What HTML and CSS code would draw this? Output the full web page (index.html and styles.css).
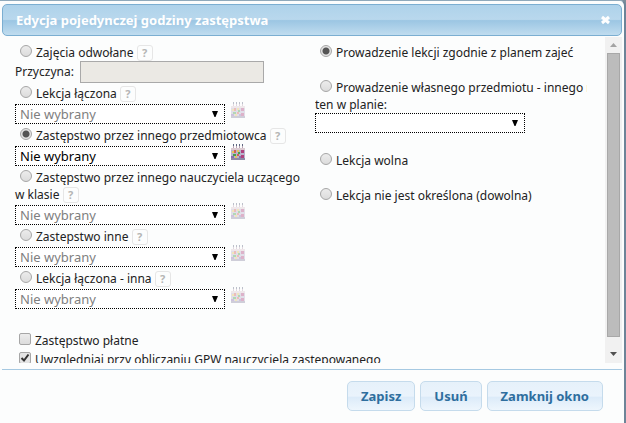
FILE: index.html
```html
<!DOCTYPE html>
<html lang="pl">
<head>
    <meta charset="UTF-8">
    <meta name="viewport" content="width=device-width, initial-scale=1.0">
    <title>Edycja pojedynczej godziny zastępstwa</title>
    <link rel="stylesheet" href="styles.css">
</head>
<body>
    <svg width="0" height="0" class="sprites" aria-hidden="true">
        <symbol id="calendar" viewBox="0 0 14 16">
            <rect x="0" y="4" width="14" height="12" fill="#b9b4cc"/>
            <rect x="0" y="4" width="14" height="2" fill="#dccbd2"/>
            <rect x="0" y="14" width="14" height="2" fill="#8e8aa6"/>
            <path d="M2 0h1v2h-1zM5 0h1v2h-1zM8 0h1v2h-1zM11 0h1v2h-1z" fill="#5d6680"/>
            <path d="M2 2h1v2h-1zM5 2h1v2h-1zM8 2h1v2h-1zM11 2h1v2h-1z" fill="#b9a3b3"/>
            <path d="M1 7h2v2h-2zM6 6h2v2h-2zM4 12h2v2h-2z" fill="#e3c65c"/>
            <path d="M3 6h2v3h-2zM6 10h2v2h-2z" fill="#d2605a"/>
            <path d="M7 8h2v2h-2zM2 10h3v2h-3z" fill="#49a04c"/>
            <path d="M0 12h3v2h-3zM8 12h2v2h-2z" fill="#8a6fb0"/>
            <path d="M10 6h3v3h-3zM10 11h3v3h-3z" fill="#b0437e"/>
        </symbol>
    </svg>
    <div class="dialog">
        <div class="titlebar">
            <h1>Edycja pojedynczej godziny zastępstwa</h1>
            <button type="button" class="close" aria-label="Zamknij">
                <svg width="9" height="10" viewBox="0 0 9 10"><path d="M1 2L8 8M8 2L1 8" stroke="#fff" stroke-width="3"/></svg>
            </button>
        </div>

        <div class="body">
            <form class="content" id="zastepstwo">
                <div class="columns">
                    <div class="left">
                        <div class="option">
                            <input type="radio" name="typ" id="odwolane"><label for="odwolane">Zajęcia odwołane</label>
                            <span class="help">?</span>
                        </div>
                        <div class="reason">
                            <label for="przyczyna">Przyczyna:</label>
                            <input type="text" id="przyczyna" disabled>
                        </div>

                        <div class="option">
                            <input type="radio" name="typ" id="laczona"><label for="laczona">Lekcja łączona</label>
                            <span class="help">?</span>
                        </div>
                        <div class="picker">
                            <select disabled aria-label="Lekcja łączona"><option>Nie wybrany</option></select>
                            <svg class="calendar faded"><use href="#calendar"/></svg>
                        </div>

                        <div class="option">
                            <input type="radio" name="typ" id="przedmiotowiec" checked><label for="przedmiotowiec">Zastępstwo przez innego przedmiotowca</label>
                            <span class="help">?</span>
                        </div>
                        <div class="picker">
                            <select aria-label="Przedmiotowiec"><option>Nie wybrany</option></select>
                            <svg class="calendar"><use href="#calendar"/></svg>
                        </div>

                        <div class="option">
                            <input type="radio" name="typ" id="uczacy"><label for="uczacy">Zastępstwo przez innego nauczyciela uczącego<br>w klasie</label>
                            <span class="help">?</span>
                        </div>
                        <div class="picker">
                            <select disabled aria-label="Nauczyciel"><option>Nie wybrany</option></select>
                            <svg class="calendar faded"><use href="#calendar"/></svg>
                        </div>

                        <div class="option">
                            <input type="radio" name="typ" id="inne"><label for="inne">Zastepstwo inne</label>
                            <span class="help">?</span>
                        </div>
                        <div class="picker">
                            <select disabled aria-label="Zastepstwo inne"><option>Nie wybrany</option></select>
                            <svg class="calendar faded"><use href="#calendar"/></svg>
                        </div>

                        <div class="option">
                            <input type="radio" name="typ" id="laczona-inna"><label for="laczona-inna">Lekcja łączona - inna</label>
                            <span class="help">?</span>
                        </div>
                        <div class="picker">
                            <select disabled aria-label="Lekcja łączona - inna"><option>Nie wybrany</option></select>
                            <svg class="calendar faded"><use href="#calendar"/></svg>
                        </div>
                    </div>

                    <div class="right">
                        <div class="option">
                            <input type="radio" name="lekcja" id="zgodnie" checked><label for="zgodnie">Prowadzenie lekcji zgodnie z planem zajeć</label>
                        </div>
                        <div class="own">
                            <div class="option">
                                <input type="radio" name="lekcja" id="wlasny"><label for="wlasny">Prowadzenie własnego przedmiotu - innego niż<br>ten w planie:</label>
                            </div>
                            <select aria-label="Przedmiot"><option></option></select>
                        </div>
                        <div class="option">
                            <input type="radio" name="lekcja" id="wolna"><label for="wolna">Lekcja wolna</label>
                        </div>
                        <div class="option">
                            <input type="radio" name="lekcja" id="dowolna"><label for="dowolna">Lekcja nie jest określona (dowolna)</label>
                        </div>
                    </div>
                </div>

                <div class="checks">
                    <div class="check">
                        <input type="checkbox" id="platne"><label for="platne">Zastępstwo płatne</label>
                    </div>
                    <div class="check">
                        <input type="checkbox" id="gpw" checked><label for="gpw">Uwzględniaj przy obliczaniu GPW nauczyciela zastępowanego</label>
                    </div>
                </div>
            </form>
            <div class="scrollbar" aria-hidden="true">
                <svg width="17" height="16"><path d="M5 10h7l-3.500-4z" fill="#a3a3a3"/></svg>
                <div class="thumb"></div>
                <svg width="17" height="16"><path d="M5 5h7l-3.500 4z" fill="#505050"/></svg>
            </div>
        </div>

        <div class="buttons">
            <button type="submit" form="zastepstwo">Zapisz</button>
            <button type="button">Usuń</button>
            <button type="button">Zamknij okno</button>
        </div>
    </div>
</body>
</html>
```

FILE: styles.css
```css
* {
    box-sizing: border-box;
}
body {
    margin: 0;
    background: #7d8d99;
    color: #222;
    font: 12px/17px "Noto Sans", "Open Sans", sans-serif;
}
input, select, button {
    margin: 0;
    font: inherit;
}
.sprites {
    position: absolute;
}
.dialog {
    display: flex;
    flex-direction: column;
    height: 100vh;
    padding: 3px 2px 0;
    border-top: 1px solid #8fa9bb;
    border-right: 2px solid #6d8498;
    border-top-right-radius: 6px;
    background: #fcfdfd;
}

/* title bar */
.titlebar {
    display: flex;
    align-items: center;
    justify-content: space-between;
    flex: none;
    height: 32px;
    padding: 0 11px 0 13px;
    border: 1px solid #7baed1;
    border-radius: 5px;
    background: linear-gradient(#aed2ea 0%, #b9d8ed 48%, #9cc6e3 52%, #c0dcef 100%);
}
.titlebar h1 {
    margin: 0;
    color: #fff;
    font-size: 13px;
    font-weight: bold;
}
.close {
    display: flex;
    padding: 0;
    border: none;
    background: none;
}

/* scrolled part */
.body {
    display: flex;
    flex: 1;
    min-height: 0;
    margin-top: 1px;
}
.content {
    flex: 1;
    min-width: 0;
    overflow: hidden;
    padding: 3px 18px 0 13px;
}
.columns {
    display: flex;
}
.left {
    flex: none;
    width: 300px;
}
.right {
    display: flex;
    flex-direction: column;
    gap: 14px;
    flex: 1;
    min-width: 0;
    overflow: hidden;
}
.option {
    min-height: 21px;
    padding-top: 4px;
    white-space: nowrap;
}
.reason + .option, .picker + .option {
    padding: 2px 0;
}
.reason {
    display: flex;
    gap: 6px;
    height: 22px;
    line-height: 21px;
}
.reason input {
    width: 184px;
    border: 1px solid #a9a9a9;
    background: #ebe9e4;
}
.picker {
    display: flex;
    align-items: flex-start;
    gap: 6px;
    height: 21px;
}

input[type="radio"], input[type="checkbox"] {
    appearance: none;
    width: 12px;
    height: 12px;
    border: 1px solid #a6a6a6;
    background: linear-gradient(#ececec, #dcdcdc);
}
input[type="radio"] {
    margin: 0 4px 0 5px;
    border-radius: 50%;
    vertical-align: 0;
}
input[type="radio"]:checked {
    background: radial-gradient(circle, #555 3px, #e4e4e4 4px);
}
input[type="checkbox"] {
    margin: 0 4px 0 4px;
    border-radius: 2px;
    vertical-align: 0;
}
input[type="checkbox"]:checked {
    background: #e4e4e4 url("data:image/svg+xml,%3Csvg xmlns='http://www.w3.org/2000/svg' viewBox='0 0 10 10'%3E%3Cpath d='M1.500 5L4 7.500L8.500 1.500' fill='none' stroke='%23333' stroke-width='2'/%3E%3C/svg%3E") center no-repeat;
}
.help {
    display: inline-block;
    width: 16px;
    height: 16px;
    margin: -1px 0 -2px;
    border: 1px solid #e6e6e6;
    border-radius: 3px;
    color: #b5b5b5;
    font-size: 11px;
    font-weight: bold;
    line-height: 14px;
    text-align: center;
}
select {
    display: block;
    appearance: none;
    width: 210px;
    height: 20px;
    padding: 0 4px;
    border: 1px dotted #000;
    border-radius: 0;
    background: #fff url("data:image/svg+xml,%3Csvg xmlns='http://www.w3.org/2000/svg' width='6' height='6'%3E%3Cpath d='M0 0h6L3.500 6h-1z'/%3E%3C/svg%3E") right 6px center no-repeat;
    color: #000;
    font-size: 13px;
}
select:disabled {
    color: #808080;
    opacity: 1;
}
.calendar {
    width: 14px;
    height: 16px;
    margin-top: -2px;
}
.faded {
    opacity: 0.4;
}
.own {
    padding-bottom: 1px;
}
.checks {
    margin-top: 20px;
}
.check {
    height: 19px;
    padding-top: 2px;
    white-space: nowrap;
}

.scrollbar {
    display: flex;
    flex-direction: column;
    flex: none;
    width: 17px;
    background: #f1f1f1;
}
.thumb {
    height: 284px;
    margin: 0 2px;
    border: 1px solid #a8a8a8;
    background: #bcbcbc;
}
.scrollbar svg:last-child {
    margin-top: auto;
}

/* footer */
.buttons {
    display: flex;
    justify-content: flex-end;
    gap: 5px;
    flex: none;
    margin-top: 6px;
    padding: 11px 19px 12px;
    border-top: 1px solid #a6c9e2;
}
.buttons button {
    height: 30px;
    padding: 0 13px;
    border: 1px solid #c5dbec;
    border-radius: 5px;
    background: linear-gradient(#e6f1fa 0%, #eaf3fc 50%, #dcebf9 55%, #eef6fd 100%);
    color: #2e6e9e;
    font-size: 13px;
    font-weight: bold;
}
```
